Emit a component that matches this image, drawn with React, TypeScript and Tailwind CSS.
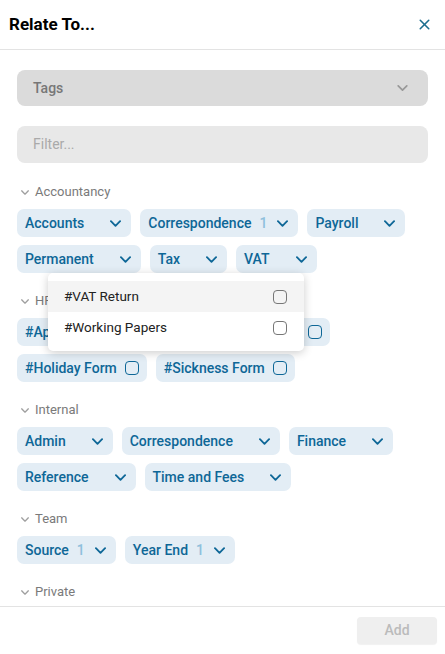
import { X } from "lucide-react";

type Tag = { name: string; count?: number; kind?: "folder" | "check" };

const groups: { title: string; tags: Tag[] }[] = [
  {
    title: "Accountancy",
    tags: [
      { name: "Accounts" },
      { name: "Correspondence", count: 1 },
      { name: "Payroll" },
      { name: "Permanent" },
      { name: "Tax" },
      { name: "VAT" },
    ],
  },
  {
    title: "HR",
    tags: [
      { name: "#Appraisal", kind: "check" },
      { name: "#Contract of Employment", kind: "check" },
      { name: "#Holiday Form", kind: "check" },
      { name: "#Sickness Form", kind: "check" },
    ],
  },
  {
    title: "Internal",
    tags: [
      { name: "Admin" },
      { name: "Correspondence" },
      { name: "Finance" },
      { name: "Reference" },
      { name: "Time and Fees" },
    ],
  },
  {
    title: "Team",
    tags: [
      { name: "Source", count: 1 },
      { name: "Year End", count: 1 },
    ],
  },
  { title: "Private", tags: [] },
];

const font = { fontFamily: "Roboto, 'Noto Sans', sans-serif" };

function Chevron({ className }: { className?: string }) {
  return (
    <svg viewBox="0 0 12 7" className={className} fill="none">
      <path d="M1 1l5 5 5-5" stroke="currentColor" strokeWidth="2" strokeLinecap="round" strokeLinejoin="round" />
    </svg>
  );
}

function Chip({ tag }: { tag: Tag }) {
  if (tag.kind === "check") {
    return (
      <div className="flex h-[28px] items-center rounded-[7px] bg-[#e3edf5] pl-2 pr-2 text-[14px] font-medium text-[#0e6797]">
        <span>{tag.name}</span>
        <span className="ml-2 h-[14px] w-[14px] rounded-[4px] border-[1.5px] border-[#0e6797]" />
      </div>
    );
  }
  return (
    <div className="flex h-[28px] items-center rounded-[7px] bg-[#e3edf5] pl-2 pr-[10px] text-[14px] font-medium text-[#0e6797]">
      <span>{tag.name}</span>
      <span className="ml-2 w-2 text-center text-[#8fc0dc]">{tag.count ?? ""}</span>
      <Chevron className="ml-[10px] h-[7px] w-[11px]" />
    </div>
  );
}

export default function App() {
  return (
    <div className="flex h-[654px] w-[445px] flex-col bg-white" style={font}>
      {/* Header */}
      <div className="flex h-[50px] shrink-0 items-center justify-between border-b border-[#e3e3e3] pl-[9px] pr-[12px]">
        <h1 className="text-[17px] font-bold text-black">Relate To...</h1>
        <X className="h-[17px] w-[17px] text-[#1b6e8e]" strokeWidth={2.2} />
      </div>

      {/* Body */}
      <div className="relative flex-1 overflow-hidden px-[17px] pt-[20px]">
        <div className="flex h-[36px] items-center justify-between rounded-[8px] bg-[#dbdbdb] pl-4 pr-[20px]">
          <span className="text-[14px] font-medium text-[#777]">Tags</span>
          <Chevron className="h-[6px] w-[11px] text-[#999]" />
        </div>
        <div className="mt-[20px] flex h-[37px] items-center rounded-[8px] bg-[#e8e8e8] pl-4">
          <span className="text-[14px] text-[#aaa]">Filter...</span>
        </div>

        <div className="mt-[21px] flex flex-col gap-[20px]">
          {groups.map((g, gi) => (
            <div key={g.title} className="relative">
              <div className="flex h-4 items-center text-[13px] leading-4 text-[#7a7a7a]">
                <Chevron className="ml-1 h-[5px] w-[8px] text-[#a0a0a0]" />
                <span className="ml-[6px]">{g.title}</span>
              </div>
              {g.tags.length > 0 && (
                <div className="mt-[9px] flex flex-wrap gap-x-[9px] gap-y-[8px]">
                  {g.tags.map((t) => (
                    <Chip key={t.name} tag={t} />
                  ))}
                </div>
              )}
              {gi === 0 && (
                <div className="absolute left-[31px] top-[89px] z-10 w-[256px] rounded-[5px] bg-white py-2 shadow-[0_2px_10px_rgba(0,0,0,0.2)]">
                  {["#VAT Return", "#Working Papers"].map((item, i) => (
                    <div
                      key={item}
                      className={`flex h-[31px] items-center justify-between pl-4 pr-[17px] text-[13.5px] text-[#222] ${
                        i === 0 ? "bg-[#f4f4f4]" : ""
                      }`}
                    >
                      <span>{item}</span>
                      <span className="h-[14px] w-[14px] rounded-[4px] border-[1.5px] border-[#777]" />
                    </div>
                  ))}
                </div>
              )}
            </div>
          ))}
        </div>
      </div>

      {/* Footer */}
      <div className="flex h-[48px] shrink-0 items-center justify-end border-t border-[#e3e3e3] pr-2">
        <button className="h-[27px] w-[80px] rounded-[4px] bg-[#efefef] text-[14px] font-medium text-[#bbb] shadow-[0_1px_1px_rgba(0,0,0,0.06)]">
          Add
        </button>
      </div>
    </div>
  );
}
